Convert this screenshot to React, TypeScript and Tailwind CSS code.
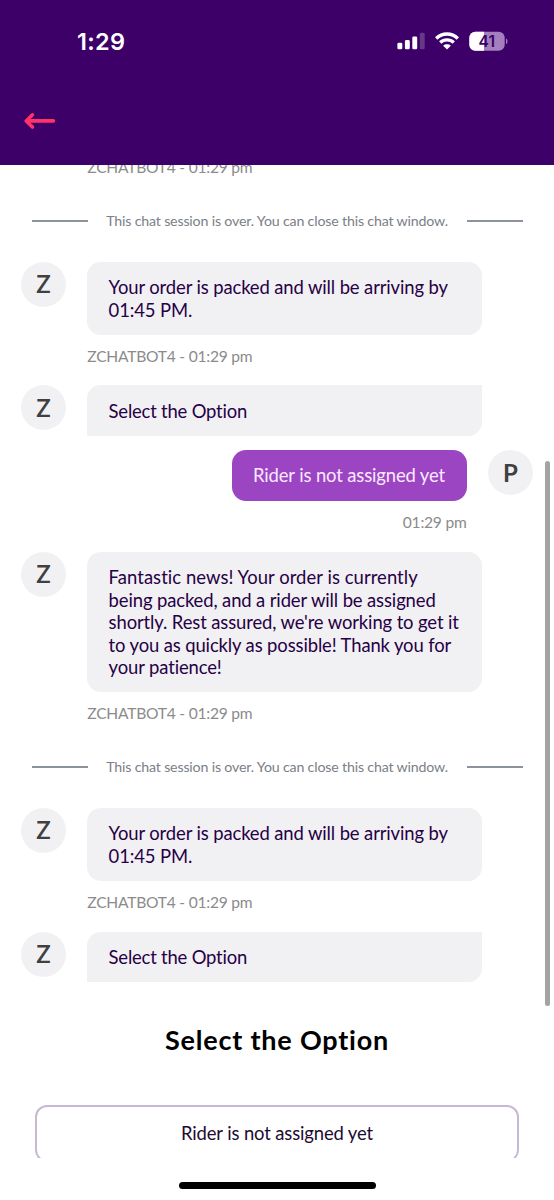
import type { ReactNode } from "react";
import clsx from "clsx";

function StatusIcons() {
    return (
        <svg width="112" height="24" viewBox="0 0 112 24" fill="none">
            {/* Signal */}
            <rect x="0.4" y="13.8" width="4.9" height="6.5" rx="1.4" fill="#fff" />
            <rect x="7.9" y="11.1" width="4.9" height="9.2" rx="1.4" fill="#fff" />
            <rect x="15.3" y="7.4" width="4.9" height="12.9" rx="1.4" fill="#fff" />
            <rect x="22.8" y="3.8" width="4.9" height="16.5" rx="1.4" fill="#fff" fillOpacity="0.22" />
            {/* Wifi */}
            <path d="M39.2 9.5C45.2 3.5 54.8 3.5 60.8 9.5" stroke="#fff" strokeWidth="3.3" />
            <path d="M43.2 13.5C47 9.9 53 9.9 56.8 13.5" stroke="#fff" strokeWidth="3.3" />
            <path d="M50 20.6L46.2 16.7C48.2 14.8 51.8 14.8 53.8 16.7Z" fill="#fff" />
            {/* Battery */}
            <clipPath id="level">
                <rect x="72" y="2" width="15" height="20" />
            </clipPath>
            <rect x="72.3" y="2.8" width="35.4" height="19" rx="6" fill="#a47fbe" />
            <rect x="72.3" y="2.8" width="35.4" height="19" rx="6" fill="#fff" clipPath="url(#level)" />
            <path d="M109 9.4C111 10.2 111 14.2 109 15Z" fill="#a47fbe" />
            <text x="89.8" y="17.8" textAnchor="middle" fontFamily="Inter, sans-serif" fontSize="15.5" fontWeight="600" fill="#3c0068">
                41
            </text>
        </svg>
    );
}

function Avatar({ letter }: { letter: string }) {
    return (
        <div
            className={clsx(
                "flex size-[45px] shrink-0 items-center justify-center rounded-full bg-[#f1f1f3] text-[24px] text-[#404040]",
                letter === "P" ? "font-bold" : "font-semibold"
            )}
        >
            {letter}
        </div>
    );
}

function Meta({ children, right }: { children: ReactNode; right?: boolean }) {
    return (
        <div
            className={clsx(
                "h-[50.9px] pt-[10px] text-[15.6px] leading-[22px] tracking-[-0.24px] whitespace-nowrap text-[#8b8b8b]",
                right && "pr-[0.5px] text-right"
            )}
        >
            {children}
        </div>
    );
}

function BotMessage({ lines }: { lines: string[] }) {
    return (
        <div className="flex gap-[21.3px] pl-[21px]">
            <Avatar letter="Z" />
            <div>
                <div className="w-[394.5px] rounded-[14px] bg-[#f1f1f4] px-[21.3px] pt-[14.5px] pb-[13.5px] text-[18.45px] leading-[22.5px] tracking-[-0.12px] whitespace-nowrap text-[#270045]">
                    {lines.map((line) => (
                        <div key={line} className={clsx(line.startsWith("Fantastic") && "tracking-[0.06px]")}>
                            {line}
                        </div>
                    ))}
                </div>
                <Meta>ZCHATBOT4 - 01:29 pm</Meta>
            </div>
        </div>
    );
}

function OptionPrompt() {
    return (
        <div className="flex gap-[21.3px] pl-[21px]">
            <Avatar letter="Z" />
            <div className="w-[394.5px] rounded-tl-[14px] rounded-br-[14px] bg-[#f1f1f4] px-[21.3px] pt-[14.5px] pb-[13.5px] text-[18.45px] leading-[22.5px] tracking-[-0.2px] text-[#270045]">
                Select the Option
            </div>
        </div>
    );
}

function SessionOver() {
    return (
        <div className="mb-[16.8px] flex h-[48px] items-center justify-between px-[31.5px]">
            <span className="mt-[1px] h-[2px] w-[56px] bg-[#8c939b]" />
            <span className="text-[14.2px] tracking-[-0.175px] whitespace-nowrap text-[#7a8087]">
                This chat session is over. You can close this chat window.
            </span>
            <span className="mt-[1px] h-[2px] w-[56px] bg-[#8c939b]" />
        </div>
    );
}

const packed = ["Your order is packed and will be arriving by", "01:45 PM."];

const rider = [
    "Fantastic news! Your order is currently",
    "being packed, and a rider will be assigned",
    "shortly. Rest assured, we're working to get it",
    "to you as quickly as possible! Thank you for",
    "your patience!",
];

export default function App() {
    return (
        <div className="relative flex h-[1200px] w-[554px] flex-col overflow-hidden bg-white font-['Lato',sans-serif] [font-variant-ligatures:none]">
            {/* Header */}
            <header className="h-[164.5px] shrink-0 bg-[#3c0068]">
                <div className="flex items-start justify-between pt-[26px] pr-[45px] pl-[77px]">
                    <span className="font-['Inter',sans-serif] text-[23.5px] leading-[31px] font-semibold tracking-[0.3px] text-white">1:29</span>
                    <div className="pt-[3px]">
                        <StatusIcons />
                    </div>
                </div>
                <svg className="mt-[53px] ml-[24px]" width="32" height="22" viewBox="0 0 32 22" fill="none" stroke="#ff3269" strokeWidth="3.6" strokeLinecap="round" strokeLinejoin="round">
                    <path d="M8.4 4.8L2.3 10.9L8.4 17M2.3 10.9H29.4" />
                </svg>
            </header>

            {/* Chat */}
            <main className="h-[835.5px] shrink-0 overflow-hidden">
                <div className="-mt-[18.6px]">
                    <div className="pl-[87.3px]">
                        <Meta>ZCHATBOT4 - 01:29 pm</Meta>
                    </div>
                    <SessionOver />
                    <BotMessage lines={packed} />
                    <OptionPrompt />

                    <div className="mt-[14.2px] flex justify-end gap-[21px] pr-[21px]">
                        <div>
                            <div className="w-[235px] rounded-[14px] bg-[#9c45c3] py-[14px] pr-[1px] text-center text-[18.45px] leading-[22.5px] tracking-[-0.13px] whitespace-nowrap text-[#fbeaff]">
                                Rider is not assigned yet
                            </div>
                            <Meta right>01:29 pm</Meta>
                        </div>
                        <Avatar letter="P" />
                    </div>

                    <BotMessage lines={rider} />
                    <SessionOver />
                    <BotMessage lines={packed} />
                    <OptionPrompt />
                </div>
            </main>

            {/* Options */}
            <section className="h-[158px] shrink-0 overflow-hidden px-[35px]">
                <h2 className="pt-[23px] text-center text-[27px] leading-[34px] font-bold tracking-[0.8px] text-black">Select the Option</h2>
                <button className="mt-[48px] flex h-[57px] w-full items-center justify-center rounded-[12px] border-2 border-[#c6b9d4] text-[18.45px] tracking-[-0.13px] text-[#1d0b30]">
                    Rider is not assigned yet
                </button>
            </section>

            <div className="mt-[23.5px] h-[7px] w-[197px] shrink-0 self-center rounded-full bg-black" />

            {/* Scroll thumb */}
            <div className="absolute top-[461px] right-[4px] h-[545px] w-[5px] rounded-full bg-[#a3a3a3]" />
        </div>
    );
}
